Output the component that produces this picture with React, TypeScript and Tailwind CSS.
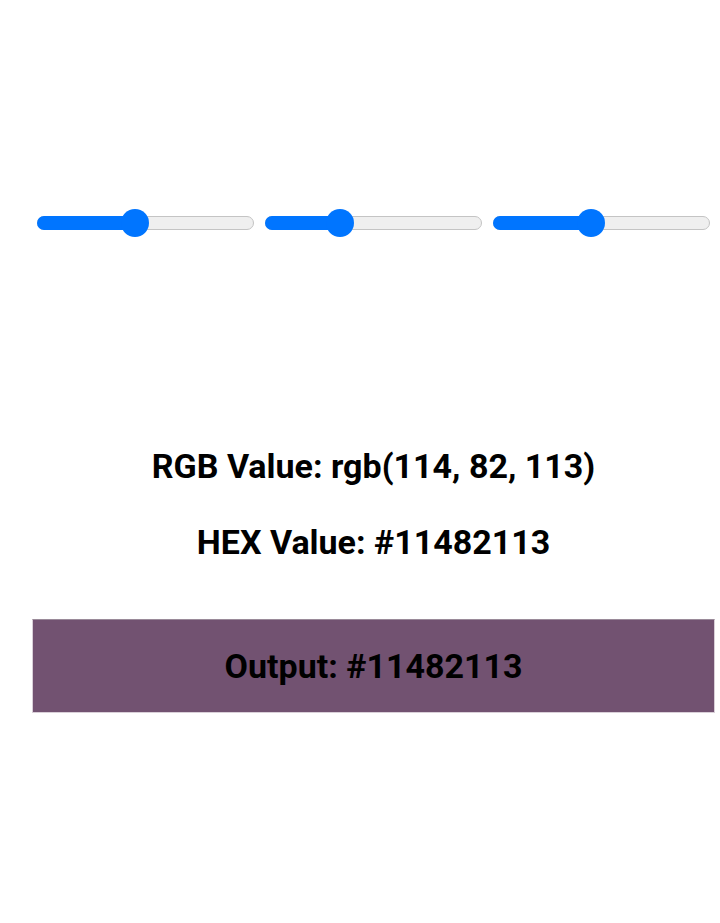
import { useState } from 'react';

type Channel = { key: string; value: number };

function Slider({ value }: { value: number }) {
  const pct = value / 255;
  return (
    <div className="relative h-[28px] w-[217px] flex items-center">
      <div className="relative h-[14px] w-full rounded-full border border-[#c4c4c4] bg-[#efefef]">
        {/* filled part runs up to the thumb centre */}
        <div
          className="absolute -left-px -top-px h-[14px] rounded-full bg-[#0075ff]"
          style={{ width: `calc(14px + ${pct} * (100% - 28px) + 1px)` }}
        />
      </div>
      <div
        className="absolute top-0 h-[28px] w-[28px] rounded-full bg-[#0075ff]"
        style={{ left: `calc(${pct} * (100% - 28px))` }}
      />
    </div>
  );
}

export default function App() {
  const [channels] = useState<Channel[]>([
    { key: 'r', value: 114 },
    { key: 'g', value: 82 },
    { key: 'b', value: 113 },
  ]);
  const [r, g, b] = channels.map((c) => c.value);
  const hex = `#${r}${g}${b}`;

  return (
    <div className="min-h-[923px] bg-white font-['Roboto',sans-serif] text-black">
      <div className="ml-8 w-[683px] pt-[209px]">
        <div className="flex gap-[11px] px-[5px]">
          {channels.map((c) => (
            <Slider key={c.key} value={c.value} />
          ))}
        </div>

        <div className="mt-[209px] flex flex-col items-center gap-[36px] text-[34px] font-bold leading-[40px]">
          <p>RGB Value: rgb({r}, {g}, {b})</p>
          <p>HEX Value: {hex}</p>
        </div>

        <div
          className="mt-[57px] flex h-[94px] items-center justify-center border border-t-[#9a8a99] border-l-[#d9cfd8] border-r-[#d9cfd8] border-b-[#d9cfd8]"
          style={{ backgroundColor: `rgb(${r}, ${g}, ${b})` }}
        >
          <p className="text-[34px] font-bold leading-[40px]">Output: {hex}</p>
        </div>
      </div>
    </div>
  );
}
